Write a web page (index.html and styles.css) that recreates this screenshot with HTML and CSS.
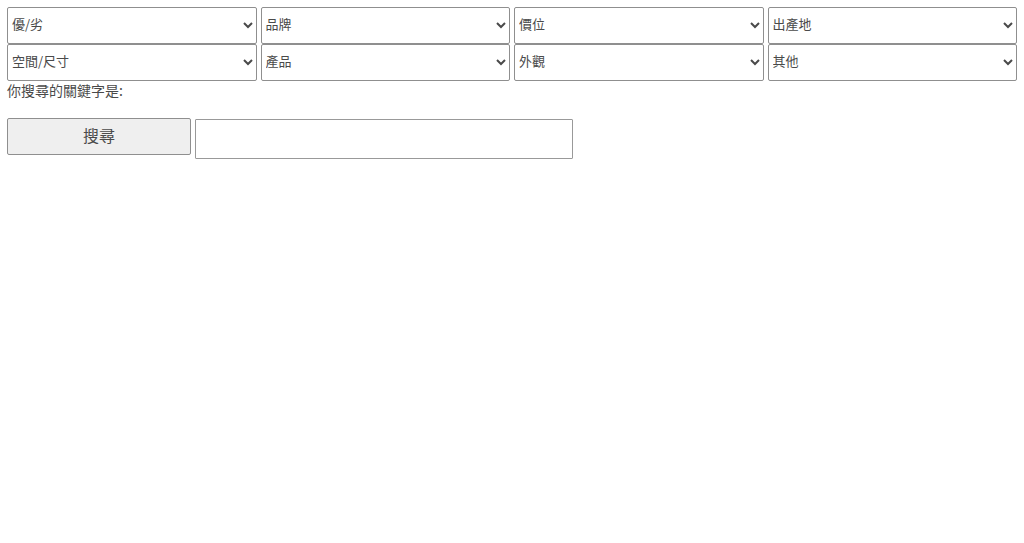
FILE: index.html
```html
<!DOCTYPE html>
<html lang="zh-Hant">
<head>
<meta charset="utf-8">
<title>搜尋</title>
<link rel="stylesheet" href="styles.css">
</head>
<body>
<div class="page">
  <div class="filters">
    <select class="filter"><option>優/劣</option></select>
    <select class="filter"><option>品牌</option></select>
    <select class="filter"><option>價位</option></select>
    <select class="filter"><option>出產地</option></select>
    <select class="filter"><option>空間/尺寸</option></select>
    <select class="filter"><option>產品</option></select>
    <select class="filter"><option>外觀</option></select>
    <select class="filter"><option>其他</option></select>
  </div>
  <div class="keyword-label">你搜尋的關鍵字是:</div>
  <div class="search-row">
    <button class="search-btn" type="button">搜尋</button>
    <input class="search-input" type="text">
  </div>
</div>
</body>
</html>
```
FILE: styles.css
```css
html, body {
  margin: 0;
  padding: 0;
  background: #ffffff;
}
body {
  font-family: "Noto Sans CJK TC", "Noto Sans", "Liberation Sans", sans-serif;
  color: #444444;
}
.page {
  padding: 7px 7px 0 7px;
}
.filters {
  display: grid;
  grid-template-columns: repeat(4, 1fr);
  column-gap: 4px;
  row-gap: 0;
}
.filter {
  height: 37px;
  box-sizing: border-box;
  font-family: "Noto Sans CJK TC", "Noto Sans", sans-serif;
  font-size: 13px;
  color: #4a4a4a;
  background: #ffffff;
  border: 1px solid #8f8f8f;
  border-radius: 2px;
  padding: 0 0 4px 0;
  margin: 0;
}
.keyword-label {
  font-size: 14px;
  line-height: 18px;
  color: #4a4a4a;
}
.search-row {
  display: flex;
  align-items: flex-start;
  gap: 4px;
  margin-top: 19px;
}
.search-btn {
  width: 184px;
  height: 37px;
  box-sizing: border-box;
  font-family: "Noto Sans CJK TC", "Noto Sans", sans-serif;
  font-size: 16px;
  color: #4a4a4a;
  background: #efefef;
  border: 1px solid #8f8f8f;
  border-radius: 2px;
  margin: 0;
  padding: 0 0 4px 0;
}
.search-input {
  width: 378px;
  height: 40px;
  box-sizing: border-box;
  margin: 1px 0 0 0;
  border: 1px solid #999999;
  border-radius: 1px;
  padding: 0 4px;
  font-size: 14px;
}
```
